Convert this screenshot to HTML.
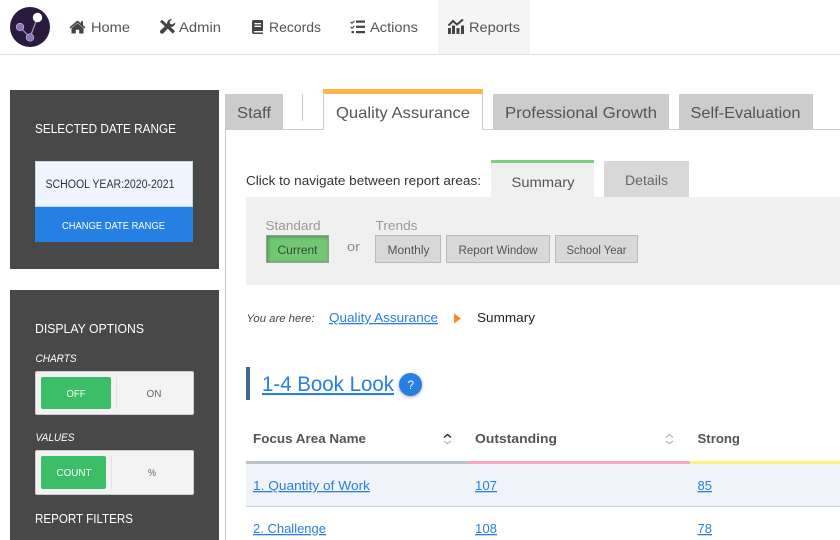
<!DOCTYPE html>
<html lang="en">
<head>
<meta charset="utf-8">
<title>Reports</title>
<style>
html,body{margin:0;padding:0;background:#fff;}
body{width:840px;height:540px;overflow:hidden;position:relative;font-family:"Liberation Sans",sans-serif;}
.b{position:absolute;box-sizing:border-box;}
svg{position:absolute;left:0;top:0;}
text{font-family:"Liberation Sans",sans-serif;}
</style>
</head>
<body>
<!-- header -->
<div class="b" style="left:0;top:54px;width:840px;height:1px;background:#e0e0e0"></div>
<div class="b" style="left:438px;top:0;width:92px;height:54px;background:#f5f5f5"></div>

<!-- sidebar -->
<div class="b" style="left:10px;top:90px;width:209px;height:179px;background:#484848"></div>
<div class="b" style="left:35px;top:161px;width:158px;height:46px;background:#eef5ff;border:1px solid #c3d6e6"></div>
<div class="b" style="left:35px;top:207px;width:158px;height:35px;background:#2680e3"></div>
<div class="b" style="left:10px;top:290px;width:209px;height:250px;background:#484848"></div>
<div class="b" style="left:35px;top:371px;width:159px;height:44px;background:#f3f3f3;border:1px solid #ccc;border-radius:2px"></div>
<div class="b" style="left:41px;top:377px;width:70px;height:32px;background:#3cbd68;border-radius:2px"></div>
<div class="b" style="left:116px;top:377px;width:1px;height:32px;background:#e2e2e2"></div>
<div class="b" style="left:35px;top:450px;width:159px;height:45px;background:#f3f3f3;border:1px solid #ccc;border-radius:2px"></div>
<div class="b" style="left:41px;top:456px;width:65px;height:33px;background:#3cbd68;border-radius:2px"></div>
<div class="b" style="left:111px;top:456px;width:1px;height:33px;background:#e2e2e2"></div>

<!-- main tabs -->
<div class="b" style="left:225px;top:129px;width:615px;height:1px;background:#ccc"></div>
<div class="b" style="left:225px;top:129px;width:1px;height:411px;background:#ccc"></div>
<div class="b" style="left:225px;top:94px;width:58px;height:35px;background:#ccc"></div>
<div class="b" style="left:302px;top:94px;width:1px;height:27px;background:#ccc"></div>
<div class="b" style="left:323px;top:89px;width:160px;height:41px;background:#fff;border-left:1px solid #ccc;border-right:1px solid #ccc;border-top:5px solid #ffb347"></div>
<div class="b" style="left:493px;top:94px;width:176px;height:36px;background:#ccc"></div>
<div class="b" style="left:679px;top:94px;width:134px;height:36px;background:#ccc"></div>

<!-- sub tabs -->
<div class="b" style="left:491px;top:160px;width:103px;height:37px;background:#f0f0f0;border-top:3px solid #7fce7f"></div>
<div class="b" style="left:604px;top:161px;width:85px;height:36px;background:#d8d8d8"></div>
<div class="b" style="left:246px;top:197px;width:594px;height:88px;background:#f0f0f0"></div>
<div class="b" style="left:266px;top:235px;width:63px;height:28px;background:#73c673;border:1px solid #8fa58f;box-shadow:inset 1px 1px 3px rgba(0,0,0,.3)"></div>
<div class="b" style="left:375px;top:235px;width:66px;height:28px;background:#d8d8d8;border:1px solid #bbb"></div>
<div class="b" style="left:446px;top:235px;width:104px;height:28px;background:#d8d8d8;border:1px solid #bbb"></div>
<div class="b" style="left:555px;top:235px;width:83px;height:28px;background:#d8d8d8;border:1px solid #bbb"></div>

<!-- heading -->
<div class="b" style="left:246px;top:367px;width:4px;height:33px;background:#3d6a94"></div>
<div class="b" style="left:399px;top:373px;width:23px;height:23px;background:#2680e3;border-radius:50%;box-shadow:0 1px 3px rgba(0,0,0,.35)"></div>

<!-- table -->
<div class="b" style="left:246px;top:461px;width:222px;height:3px;background:#b9c4ca"></div>
<div class="b" style="left:468px;top:461px;width:222px;height:3px;background:#f8a8c0"></div>
<div class="b" style="left:690px;top:461px;width:150px;height:3px;background:#fbf27a"></div>
<div class="b" style="left:246px;top:464px;width:594px;height:42px;background:#f0f4f8"></div>
<div class="b" style="left:246px;top:506px;width:594px;height:1px;background:#c0d4e8"></div>

<svg width="840" height="540" viewBox="0 0 840 540" xmlns="http://www.w3.org/2000/svg">
  <!-- logo -->
  <circle cx="30" cy="27" r="20" fill="#2a1a3e"/>
  <path d="M37.5 17.5L30 37.500M20 27L30 37.500" stroke="#a59eb3" stroke-width="1.200" fill="none"/>
  <circle cx="37.500" cy="17.500" r="4.700" fill="#fff"/>
  <circle cx="20" cy="27" r="3.800" fill="#8a74c0" stroke="#c4bdd2" stroke-width=".7"/>
  <circle cx="30" cy="37.500" r="3.800" fill="#8a74c0" stroke="#c4bdd2" stroke-width=".7"/>

  <!-- nav icons -->
  <g fill="#444">
    <path d="M77.500 20.500L69.500 27.200l1.100 1.300 6.900-5.800 6.900 5.800 1.100-1.300-2.500-2.100V21.200h-2.200v2z"/>
    <path d="M71.500 28.200l6-5 6 5V33.500h-4.300v-3.800h-3.400v3.800h-4.300z"/>
    <path d="M160 21.800l2-2 6 5.200-2.200 2.200zM175 31.300l-2.300 2.300-6-6 2.300-2.300z"/>
    <path d="M175.300 22.500a4.300 4.300 0 0 1-5.700 4.200l-6 6.300a2 2 0 0 1-3-2.800l6.500-6a4.300 4.300 0 0 1 5-5l-2.500 2.500.6 2.200 2.200.6z"/>
    <path d="M252 22a2 2 0 0 1 2-2h9v11h-8.800a1 1 0 0 0 0 1.500H263V34h-9a2 2 0 0 1-2-2z"/>
    <path d="M351 21.500l1 1 2-2 .8.8-2.800 2.800-1.800-1.800zM351 26.500l1 1 2-2 .8.8-2.800 2.800-1.800-1.800z"/>
    <rect x="351.500" y="31" width="2.500" height="2.200"/>
    <rect x="356" y="20.500" width="9" height="2.200"/><rect x="356" y="25.700" width="9" height="2.200"/><rect x="356" y="31" width="9" height="2.200"/>
    <rect x="448" y="28" width="3" height="6"/><rect x="452" y="25.500" width="3" height="8.500"/><rect x="456.500" y="28" width="3" height="6"/><rect x="461" y="25.500" width="3" height="8.500"/>
  </g>
  <rect x="254.500" y="23" width="6.500" height="1.300" fill="#fff"/><rect x="254.500" y="25.700" width="6.500" height="1.300" fill="#fff"/>
  <path d="M448.500 25.500l4.500-4.500 4 3.500 6-5" stroke="#444" stroke-width="2" fill="none"/>

  <!-- nav text -->
  <g font-size="14" fill="#555">
    <text x="91" y="32" textLength="39" lengthAdjust="spacingAndGlyphs">Home</text>
    <text x="179" y="32" textLength="42" lengthAdjust="spacingAndGlyphs">Admin</text>
    <text x="269" y="32" textLength="52" lengthAdjust="spacingAndGlyphs">Records</text>
    <text x="370" y="32" textLength="48" lengthAdjust="spacingAndGlyphs">Actions</text>
    <text x="469" y="32" textLength="51" lengthAdjust="spacingAndGlyphs">Reports</text>
  </g>

  <!-- sidebar text -->
  <g font-size="13" fill="#fff">
    <text x="35" y="133" textLength="141" lengthAdjust="spacingAndGlyphs">SELECTED DATE RANGE</text>
    <text x="35" y="333" textLength="109" lengthAdjust="spacingAndGlyphs">DISPLAY OPTIONS</text>
    <text x="35" y="523" textLength="98" lengthAdjust="spacingAndGlyphs">REPORT FILTERS</text>
  </g>
  <text x="45.500" y="188" font-size="11.500" fill="#333" textLength="129" lengthAdjust="spacingAndGlyphs">SCHOOL YEAR:2020-2021</text>
  <text x="62" y="229" font-size="10.500" fill="#fff" textLength="103" lengthAdjust="spacingAndGlyphs">CHANGE DATE RANGE</text>
  <g font-size="11" font-style="italic" fill="#fff">
    <text x="35.500" y="362" textLength="41" lengthAdjust="spacingAndGlyphs">CHARTS</text>
    <text x="35.500" y="441" textLength="39" lengthAdjust="spacingAndGlyphs">VALUES</text>
  </g>
  <g font-size="10.500">
    <text x="66.500" y="397" fill="#fff" textLength="19" lengthAdjust="spacingAndGlyphs">OFF</text>
    <text x="146.500" y="397" fill="#666" textLength="15" lengthAdjust="spacingAndGlyphs">ON</text>
    <text x="56.500" y="476" fill="#fff" textLength="35" lengthAdjust="spacingAndGlyphs">COUNT</text>
    <text x="148" y="476" fill="#666" textLength="8" lengthAdjust="spacingAndGlyphs">%</text>
  </g>

  <!-- main tabs text -->
  <g font-size="16" fill="#555">
    <text x="237" y="118" textLength="34" lengthAdjust="spacingAndGlyphs">Staff</text>
    <text x="336" y="118" textLength="134" lengthAdjust="spacingAndGlyphs">Quality Assurance</text>
    <text x="505" y="118" textLength="152" lengthAdjust="spacingAndGlyphs">Professional Growth</text>
    <text x="690.500" y="118" textLength="110" lengthAdjust="spacingAndGlyphs">Self-Evaluation</text>
  </g>

  <!-- sub nav text -->
  <text x="246" y="185" font-size="12.500" fill="#333" textLength="235" lengthAdjust="spacingAndGlyphs">Click to navigate between report areas:</text>
  <text x="511.500" y="187" font-size="13.500" fill="#555" textLength="63" lengthAdjust="spacingAndGlyphs">Summary</text>
  <text x="625" y="185" font-size="13.500" fill="#666" textLength="43" lengthAdjust="spacingAndGlyphs">Details</text>
  <g font-size="13" fill="#999">
    <text x="265.500" y="230" textLength="55" lengthAdjust="spacingAndGlyphs">Standard</text>
    <text x="375.500" y="230" textLength="42" lengthAdjust="spacingAndGlyphs">Trends</text>
    <text x="347" y="251" fill="#888" textLength="13" lengthAdjust="spacingAndGlyphs">or</text>
  </g>
  <g font-size="11.500" fill="#555">
    <text x="277.500" y="254" fill="#2f4f2f" textLength="40" lengthAdjust="spacingAndGlyphs">Current</text>
    <text x="387.500" y="254" textLength="42" lengthAdjust="spacingAndGlyphs">Monthly</text>
    <text x="458.500" y="254" textLength="79" lengthAdjust="spacingAndGlyphs">Report Window</text>
    <text x="566.500" y="254" textLength="60" lengthAdjust="spacingAndGlyphs">School Year</text>
  </g>

  <!-- breadcrumb -->
  <text x="246.500" y="322" font-size="11" font-style="italic" fill="#444" textLength="68" lengthAdjust="spacingAndGlyphs">You are here:</text>
  <text x="329" y="322" font-size="13" fill="#2a7de1" text-decoration="underline" textLength="109" lengthAdjust="spacingAndGlyphs">Quality Assurance</text>
  <path d="M454 313.500L461 318.500L454 323.500z" fill="#f98a1c"/>
  <text x="477" y="322" font-size="13" fill="#222" textLength="58" lengthAdjust="spacingAndGlyphs">Summary</text>

  <!-- heading -->
  <text x="262" y="391" font-size="21" fill="#2a7de1" text-decoration="underline" textLength="132" lengthAdjust="spacingAndGlyphs">1-4 Book Look</text>
  <text x="407.500" y="389" font-size="12" fill="#fff" textLength="6.500" lengthAdjust="spacingAndGlyphs">?</text>

  <!-- table header -->
  <g font-size="13" font-weight="bold" fill="#555">
    <text x="253" y="443" textLength="113" lengthAdjust="spacingAndGlyphs">Focus Area Name</text>
    <text x="475" y="443" textLength="82" lengthAdjust="spacingAndGlyphs">Outstanding</text>
    <text x="697.500" y="443" textLength="42.500" lengthAdjust="spacingAndGlyphs">Strong</text>
  </g>
  <g fill="none" stroke-width="1.300">
    <path d="M444 437.500L447.500 434.500L451 437.500" stroke="#222"/>
    <path d="M444 441L447.500 443.500L451 441" stroke="#bbb"/>
    <path d="M666 437.500L669.500 434.500L673 437.500" stroke="#bbb"/>
    <path d="M666 441L669.500 443.500L673 441" stroke="#bbb"/>
  </g>

  <!-- table rows -->
  <g font-size="13" fill="#2a7de1" text-decoration="underline">
    <text x="253" y="490" textLength="117" lengthAdjust="spacingAndGlyphs">1. Quantity of Work</text>
    <text x="475" y="490" textLength="22" lengthAdjust="spacingAndGlyphs">107</text>
    <text x="697.500" y="490" textLength="14.500" lengthAdjust="spacingAndGlyphs">85</text>
    <text x="253" y="533" textLength="73" lengthAdjust="spacingAndGlyphs">2. Challenge</text>
    <text x="475" y="533" textLength="22" lengthAdjust="spacingAndGlyphs">108</text>
    <text x="697.500" y="533" textLength="14.500" lengthAdjust="spacingAndGlyphs">78</text>
  </g>
</svg>
</body>
</html>
